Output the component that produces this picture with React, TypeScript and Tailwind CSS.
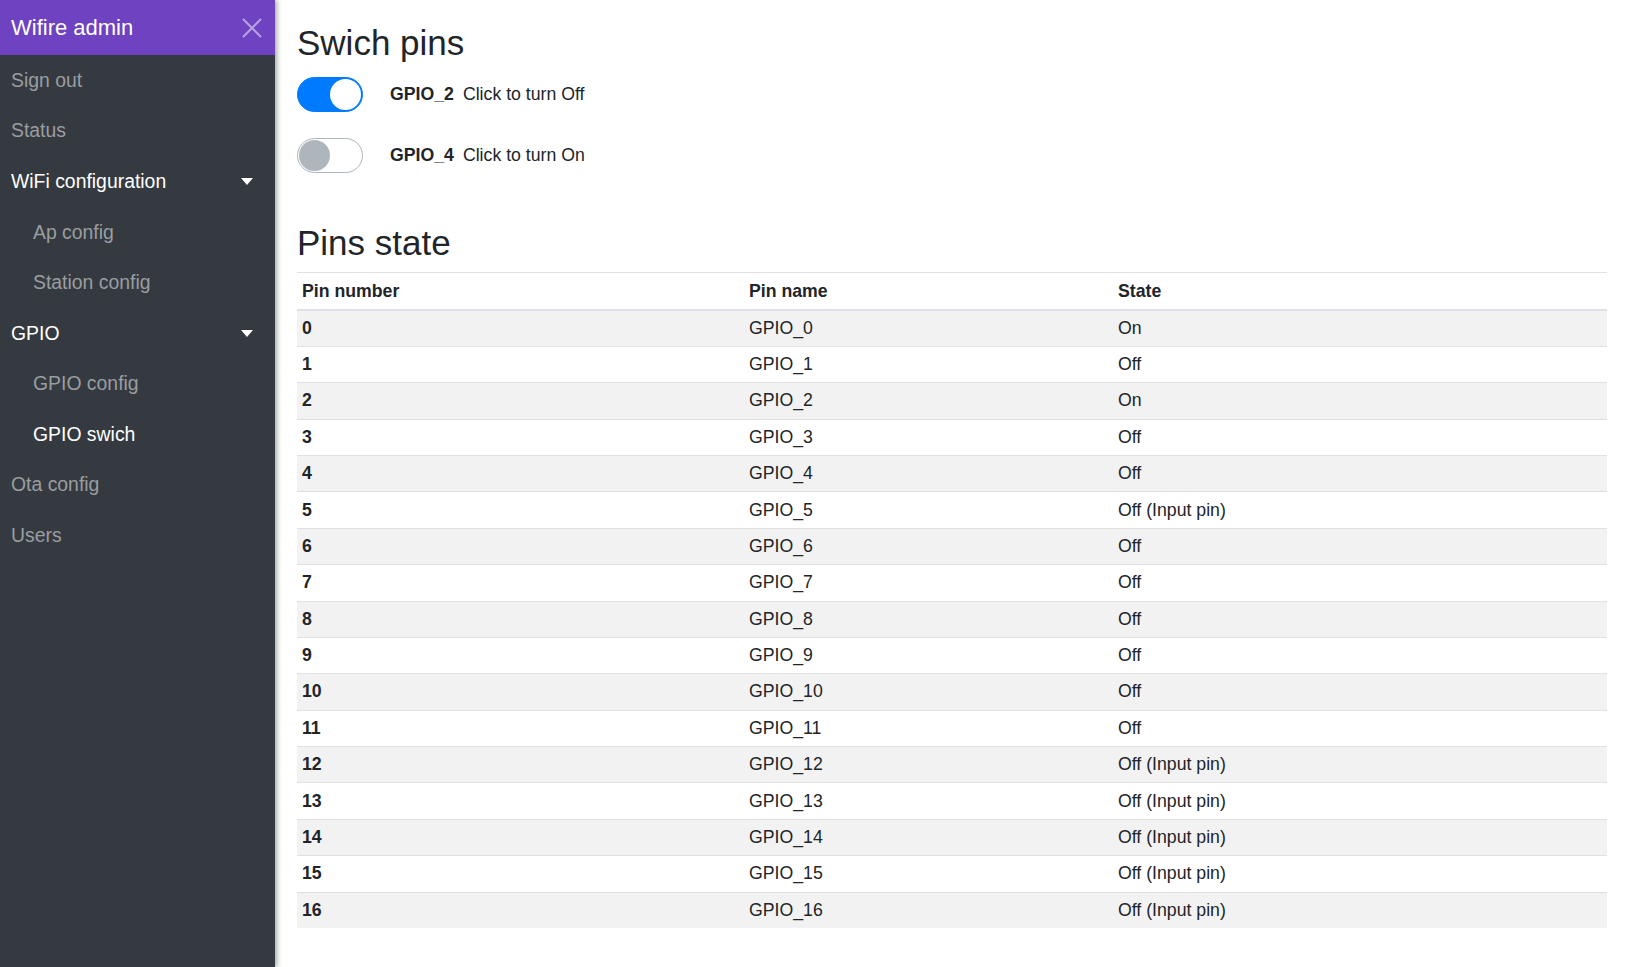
import { useState } from 'react';

const navItems = [
    { label: 'Sign out', level: 0, active: false },
    { label: 'Status', level: 0, active: false },
    { label: 'WiFi configuration', level: 0, active: true, caret: true },
    { label: 'Ap config', level: 1, active: false },
    { label: 'Station config', level: 1, active: false },
    { label: 'GPIO', level: 0, active: true, caret: true },
    { label: 'GPIO config', level: 1, active: false },
    { label: 'GPIO swich', level: 1, active: true },
    { label: 'Ota config', level: 0, active: false },
    { label: 'Users', level: 0, active: false },
];

const inputPins = [5, 12, 13, 14, 15, 16];
const onPins = [0, 2];

const pins = Array.from({ length: 17 }, (_, i) => ({
    number: i,
    name: `GPIO_${i}`,
    state: (onPins.includes(i) ? 'On' : 'Off') + (inputPins.includes(i) ? ' (Input pin)' : ''),
}));

function Toggle({ on, onClick }: { on: boolean; onClick: () => void }) {
    return (
        <button
            onClick={onClick}
            className={`relative w-[66px] h-[35px] rounded-full border shrink-0 ${on ? 'bg-[#007bff] border-[#007bff]' : 'bg-white border-[#adb5bd]'}`}
        >
            <span
                className={`absolute top-[1px] w-[31px] h-[31px] rounded-full ${on ? 'left-[32px] bg-white' : 'left-[1px] bg-[#adb5bd]'}`}
            />
        </button>
    );
}

export default function App() {
    const [switches, setSwitches] = useState<Record<string, boolean>>({ GPIO_2: true, GPIO_4: false });

    return (
        <div className="flex h-[967px] bg-white text-[#212529]" style={{ fontFamily: '"Liberation Sans", Arial, sans-serif' }}>
            <aside className="w-[275px] shrink-0 bg-[#343a40] shadow-[2px_0_5px_rgba(0,0,0,0.35)] z-10">
                <div className="h-[55px] bg-[#6f42c1] flex items-center justify-between pl-[11px] pr-[13px]">
                    <span className="text-white text-[22px]">Wifire admin</span>
                    <svg width="20" height="20" viewBox="0 0 20 20" className="text-white/50">
                        <path d="M1 1L19 19M19 1L1 19" stroke="currentColor" strokeWidth="2" />
                    </svg>
                </div>
                <nav>
                    {navItems.map(item => (
                        <div
                            key={item.label}
                            className={`h-[50.6px] flex items-center justify-between pr-[22px] text-[19.4px] ${item.level ? 'pl-[33px]' : 'pl-[11px]'} ${item.active ? 'text-white' : 'text-[#9a9da0]'}`}
                        >
                            <span>{item.label}</span>
                            {item.caret && (
                                <svg width="12" height="7" viewBox="0 0 12 7">
                                    <path d="M0 0H12L6 7Z" fill="white" />
                                </svg>
                            )}
                        </div>
                    ))}
                </nav>
            </aside>

            <main className="flex-1 px-[22px] pt-[22px]">
                <h2 className="text-[35px] leading-[42px]">Swich pins</h2>
                <div className="mt-[13px] flex flex-col gap-[26px]">
                    {Object.entries(switches).map(([name, on]) => (
                        <div key={name} className="flex items-center h-[35px]">
                            <Toggle on={on} onClick={() => setSwitches({ ...switches, [name]: !on })} />
                            <span className="ml-[27px] text-[17.7px] font-bold">{name}</span>
                            <span className="ml-[9px] text-[17.7px]">{on ? 'Click to turn Off' : 'Click to turn On'}</span>
                        </div>
                    ))}
                </div>

                <h2 className="mt-[49px] text-[35px] leading-[42px]">Pins state</h2>
                <table className="mt-[8px] w-full table-fixed border-collapse text-[17.7px] leading-[27.6px]">
                    <thead>
                        <tr className="border-t border-[#dee2e6]">
                            <th className="w-[447px] text-left font-bold px-[5px] pt-[4.5px] pb-[3.5px] border-b-2 border-[#dee2e6]">Pin number</th>
                            <th className="w-[369px] text-left font-bold px-[5px] pt-[4.5px] pb-[3.5px] border-b-2 border-[#dee2e6]">Pin name</th>
                            <th className="text-left font-bold px-[5px] pt-[4.5px] pb-[3.5px] border-b-2 border-[#dee2e6]">State</th>
                        </tr>
                    </thead>
                    <tbody>
                        {pins.map((p, i) => (
                            <tr key={p.number} className={`border-t border-[#dee2e6] ${i % 2 === 0 ? 'bg-[#f2f2f2]' : 'bg-white'}`}>
                                <td className="px-[5px] pt-[4.1px] pb-[3.7px] font-bold">{p.number}</td>
                                <td className="px-[5px] pt-[4.1px] pb-[3.7px]">{p.name}</td>
                                <td className="px-[5px] pt-[4.1px] pb-[3.7px]">{p.state}</td>
                            </tr>
                        ))}
                    </tbody>
                </table>
            </main>
        </div>
    );
}
